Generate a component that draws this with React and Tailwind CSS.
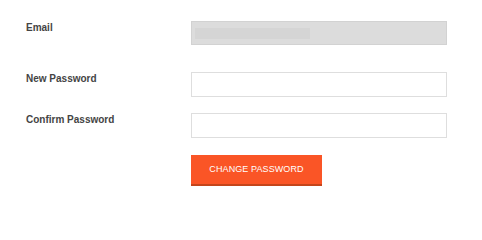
const fields = [
  { key: 'email', label: 'Email', disabled: true },
  { key: 'new', label: 'New Password', type: 'password' },
  { key: 'confirm', label: 'Confirm Password', type: 'password' },
];

function Field({ label, disabled, type, className = '' }) {
  return (
    <div className={`flex items-start ${className}`}>
      <label className="w-[165px] mt-px text-[10px] leading-[12px] font-bold text-[#444]">
        {label}
      </label>
      {disabled ? (
        <div className="w-[256px] h-[24px] border border-[#d2d2d2] bg-[#dcdcdc] flex items-center pl-[3px]">
          {/* blurred email value */}
          <div className="w-[115px] h-[11px] bg-[#d5d5d5] blur-[0.5px]" />
        </div>
      ) : (
        <input
          type={type}
          className="w-[256px] h-[25px] border border-[#dedede] bg-white outline-none px-2 text-[11px]"
        />
      )}
    </div>
  );
}

export default function App() {
  return (
    <div
      className="w-[482px] h-[228px] bg-white pt-[21px] pl-[26px]"
      style={{ fontFamily: '"Liberation Sans", Arial, sans-serif' }}
    >
      <Field {...fields[0]} />
      <Field {...fields[1]} className="mt-[27px]" />
      <Field {...fields[2]} className="mt-[16px]" />
      <div className="pl-[165px] mt-[17px]">
        <button className="w-[131px] h-[31px] bg-[#fa5526] border-b-2 border-[#c4451b] text-white text-[9px] font-medium tracking-[0.1px] uppercase">
          Change Password
        </button>
      </div>
    </div>
  );
}
